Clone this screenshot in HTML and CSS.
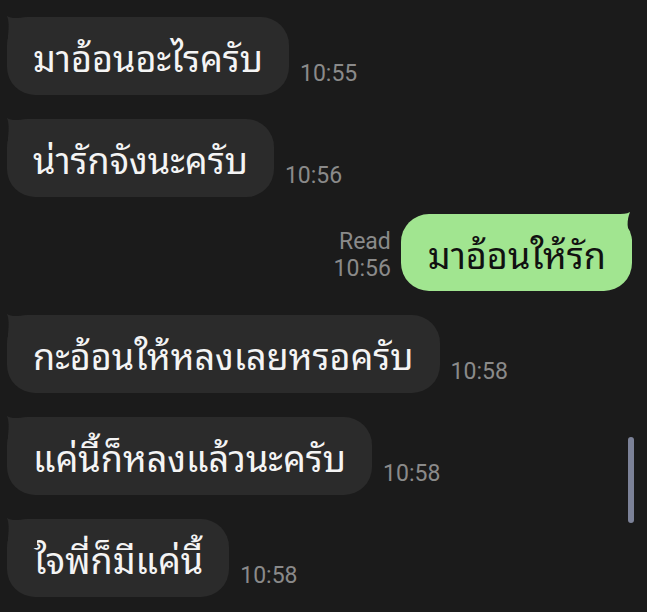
FILE: index.html
```html
<!DOCTYPE html>
<html lang="th">
<head>
<meta charset="utf-8">
<link rel="stylesheet" href="styles.css">
</head>
<body>
<div class="chat">
  <div class="row in">
    <div class="bubble">มาอ้อนอะไรครับ</div>
    <div class="meta"><span>10:55</span></div>
  </div>
  <div class="row in">
    <div class="bubble">น่ารักจังนะครับ</div>
    <div class="meta"><span>10:56</span></div>
  </div>
  <div class="row out">
    <div class="meta"><span>Read</span><span>10:56</span></div>
    <div class="bubble">มาอ้อนให้รัก</div>
  </div>
  <div class="row in">
    <div class="bubble">กะอ้อนให้หลงเลยหรอครับ</div>
    <div class="meta"><span>10:58</span></div>
  </div>
  <div class="row in">
    <div class="bubble">แค่นี้ก็หลงแล้วนะครับ</div>
    <div class="meta"><span>10:58</span></div>
  </div>
  <div class="row in">
    <div class="bubble">ใจพี่ก็มีแค่นี้</div>
    <div class="meta"><span>10:58</span></div>
  </div>
</div>
<div class="scrollbar"></div>
</body>
</html>
```
FILE: styles.css
```css
html, body {
  margin: 0;
  padding: 0;
  background: #1b1b1b;
  height: 100%;
  overflow: hidden;
}
.chat {
  display: flex;
  flex-direction: column;
  gap: 24px;
  padding: 17px 15px 0 7px;
}
.row {
  display: flex;
  align-items: flex-end;
}
.row.out {
  justify-content: flex-end;
  margin-top: -7px;
}
.bubble {
  position: relative;
  height: 78px;
  box-sizing: border-box;
  display: flex;
  align-items: center;
  padding: 0 26px;
  border-radius: 28px;
  background: #2b2b2b;
  color: #f4f4f4;
  font-family: "Noto Sans Thai Looped", "Loma", sans-serif;
  font-size: 36px;
  font-weight: 390;
  white-space: nowrap;
}
.out .bubble {
  height: 77px;
  background: #a1e590;
  color: #111;
  padding: 0 26px 0 27px;
}
.bubble::before {
  content: "";
  position: absolute;
  top: -1px;
  width: 30px;
  height: 30px;
  background: inherit;
}
.in .bubble::before {
  left: 0;
  clip-path: path("M0 0 C5 3 11 2 20 1 L30 1 L30 30 L1 30 L1 20 C2 11 2 5 0 0 Z");
}
.out .bubble::before {
  right: 0;
  top: -2px;
  clip-path: path("M28 0 C25 8 24 16 30 28 L30 30 L0 30 L0 2 L14 2 C20 2 25 2 28 0 Z");
}
.meta {
  display: flex;
  flex-direction: column;
  font-family: Roboto, "Liberation Sans", sans-serif;
  font-size: 23px;
  line-height: 27px;
  color: #8a8a8a;
  padding-bottom: 8px;
}
.in .meta {
  margin-left: 11px;
}
.out .meta {
  align-items: flex-end;
  margin-right: 10px;
  padding-bottom: 9px;
}
.scrollbar {
  position: absolute;
  left: 628px;
  top: 437px;
  width: 6px;
  height: 86px;
  border-radius: 3px;
  background: #7c8298;
}
```
